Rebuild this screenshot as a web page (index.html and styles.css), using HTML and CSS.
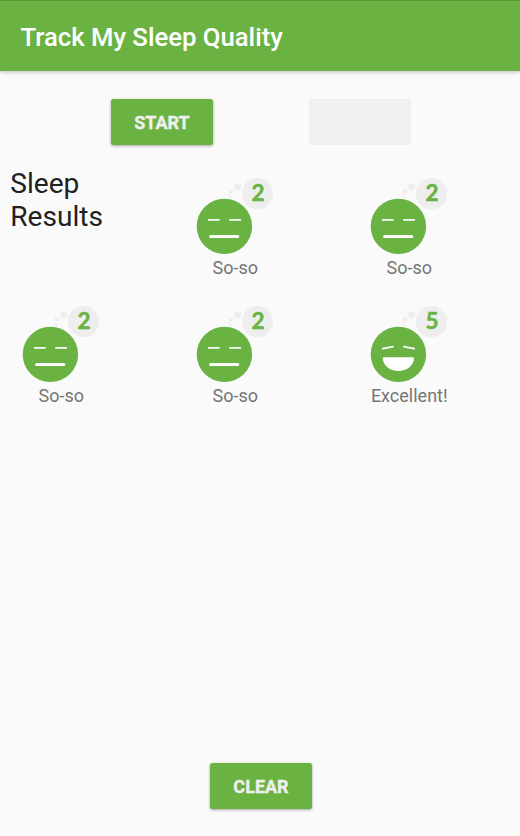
FILE: index.html
```html
<!DOCTYPE html>
<html lang="en">
<head>
<meta charset="utf-8">
<title>Track My Sleep Quality</title>
<link rel="stylesheet" href="styles.css">
</head>
<body>
<svg class="defs" width="0" height="0" aria-hidden="true">
  <symbol id="face" viewBox="0 0 78 78">
    <g class="bubble">
      <circle cx="61.5" cy="16.6" r="15.6"/>
      <circle cx="41.5" cy="9.9" r="3.7"/>
      <circle cx="34.9" cy="14.3" r="2.4"/>
      <circle cx="33.8" cy="19.5" r="1.4"/>
    </g>
    <circle class="head" cx="28.4" cy="49.4" r="27.7"/>
  </symbol>
  <symbol id="soso" viewBox="0 0 78 78">
    <use href="#face"/>
    <path class="eyes" d="M12.6 42.8h10.4M33.9 42.8h10.4"/>
    <path class="mouth" d="M14.6 59.6h27.2"/>
  </symbol>
  <symbol id="excellent" viewBox="0 0 78 78">
    <use href="#face"/>
    <path class="eyes" d="M12.8 43.7l10.2-2.1M33.9 41.6l10.3 2.1"/>
    <path class="smile" d="M14 52.3h28.9q1.1 0 1.1 1.2C43.7 60.6 36.7 66 28.4 66S13.2 60.6 12.8 53.5q0-1.2 1.2-1.2z"/>
  </symbol>
</svg>
<header class="app-bar"><h1>Track My Sleep Quality</h1></header>
<main>
  <div class="actions">
    <button class="btn">START</button>
    <button class="btn" disabled>STOP</button>
  </div>
  <section class="grid">
    <h2>Sleep<br>Results</h2>
    <figure><div class="icon"><svg><use href="#soso"/></svg><span>2</span></div><figcaption>So-so</figcaption></figure>
    <figure><div class="icon"><svg><use href="#soso"/></svg><span>2</span></div><figcaption>So-so</figcaption></figure>
    <figure><div class="icon"><svg><use href="#soso"/></svg><span>2</span></div><figcaption>So-so</figcaption></figure>
    <figure><div class="icon"><svg><use href="#soso"/></svg><span>2</span></div><figcaption>So-so</figcaption></figure>
    <figure><div class="icon"><svg><use href="#excellent"/></svg><span>5</span></div><figcaption>Excellent!</figcaption></figure>
  </section>
</main>
<footer><button class="btn">CLEAR</button></footer>
</body>
</html>
```
FILE: styles.css
```css
* { box-sizing: border-box; }
body {
  margin: 0;
  height: 836px;
  display: flex;
  flex-direction: column;
  overflow: hidden;
  background: #fafafa;
  font-family: Roboto, sans-serif;
}
.defs { position: absolute; }
.app-bar {
  height: 71px;
  flex: none;
  display: flex;
  align-items: center;
  padding: 1px 20.5px 0;
  border-top: 1px solid #559b2f;
  background: #6ab343;
  box-shadow: 0 1px 4px rgba(0, 0, 0, .25);
}
h1 {
  margin: 0;
  color: #fff;
  font-size: 25.7px;
  font-weight: 500;
  line-height: 32px;
  white-space: nowrap;
}
main { flex: 1; }
.actions {
  display: flex;
  gap: 96px;
  padding: 28px 0 0 111px;
}
.btn {
  width: 102px;
  height: 46px;
  padding: 2px 0 0;
  border: 0;
  border-radius: 2.5px;
  background: #6ab343;
  color: #eff0ef;
  font: 700 18px/22px Roboto, sans-serif;
  -webkit-text-stroke: .35px currentColor;
  box-shadow: 0 1px 3px rgba(0, 0, 0, .35);
}
.btn:disabled {
  background: #eff1f0;
  color: #f2f0f1;
  box-shadow: none;
}
.grid {
  display: grid;
  grid-template-columns: repeat(3, 174px);
  grid-auto-rows: 127.7px;
  margin-top: 21px;
}
h2 {
  margin: 0;
  padding: 1px 0 0 10.3px;
  color: #212121;
  font-size: 28.1px;
  font-weight: 400;
  line-height: 33px;
}
figure {
  width: 78px;
  margin: 11px 0 0 22px;
}
.icon { position: relative; height: 78px; }
.icon svg { display: block; width: 78px; height: 78px; }
.icon span {
  position: absolute;
  left: 46.5px;
  top: 1.2px;
  width: 31px;
  color: #6ab343;
  font-family: Lato, sans-serif;
  font-size: 22.5px;
  font-weight: 700;
  line-height: 30px;
  text-align: center;
  -webkit-text-stroke: .5px currentColor;
}
figcaption {
  display: flex;
  justify-content: center;
  margin-top: 2px;
  padding-left: .5px;
  color: #757575;
  font-size: 18px;
  line-height: 22px;
  white-space: nowrap;
}
.bubble { fill: #eee; }
.head { fill: #6ab343; }
.eyes, .mouth { fill: none; stroke: #fafafa; stroke-linecap: round; }
.eyes { stroke-width: 1.8; }
.mouth { stroke-width: 3; }
.smile { fill: #fff; }
footer {
  display: flex;
  justify-content: center;
  padding: 0 0 27px 2px;
}
```
